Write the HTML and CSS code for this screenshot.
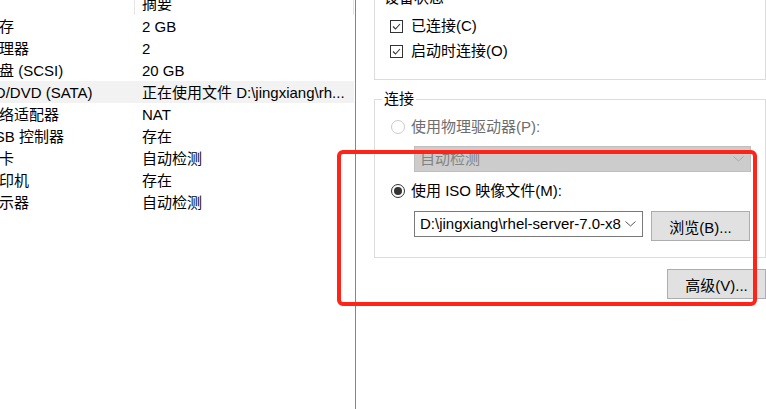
FILE: index.html
```html
<!DOCTYPE html>
<html lang="zh-CN">
<head>
    <meta charset="UTF-8">
    <title>虚拟机设置 - CD/DVD (SATA)</title>
    <link rel="stylesheet" href="styles.css">
</head>
<body>
    <div class="window">

        <div class="device-list">
            <div class="list-head">
                <span class="col-name"></span>
                <span class="col-summary">摘要</span>
            </div>
            <div class="row"><span class="col-name">内存</span><span class="col-summary">2 GB</span></div>
            <div class="row"><span class="col-name">处理器</span><span class="col-summary">2</span></div>
            <div class="row"><span class="col-name">硬盘 (SCSI)</span><span class="col-summary">20 GB</span></div>
            <div class="row selected"><span class="col-name">CD/DVD (SATA)</span><span class="col-summary">正在使用文件 D:\jingxiang\rh...</span></div>
            <div class="row"><span class="col-name">网络适配器</span><span class="col-summary">NAT</span></div>
            <div class="row"><span class="col-name">USB 控制器</span><span class="col-summary">存在</span></div>
            <div class="row"><span class="col-name">声卡</span><span class="col-summary">自动检测</span></div>
            <div class="row"><span class="col-name">打印机</span><span class="col-summary">存在</span></div>
            <div class="row"><span class="col-name">显示器</span><span class="col-summary">自动检测</span></div>
        </div>

        <div class="splitter"></div>

        <div class="settings">
            <div class="group status-group">
                <div class="group-title">设备状态</div>
                <div class="check-row first">
                    <span class="checkbox">
                        <svg width="11" height="11" viewBox="0 0 11 11"><path d="M2 5.5 L4.5 8 L9 3" fill="none" stroke="#333" stroke-width="1.1"/></svg>
                    </span>
                    已连接(C)
                </div>
                <div class="check-row">
                    <span class="checkbox">
                        <svg width="11" height="11" viewBox="0 0 11 11"><path d="M2 5.5 L4.5 8 L9 3" fill="none" stroke="#333" stroke-width="1.1"/></svg>
                    </span>
                    启动时连接(O)
                </div>
            </div>

            <div class="group connect-group">
                <div class="group-title">连接</div>
                <div class="radio-row disabled">
                    <span class="radio"></span>
                    使用物理驱动器(P):
                </div>
                <div class="combo combo-disabled">
                    <span class="combo-text">自动检测</span>
                    <svg class="chevron" width="11" height="6" viewBox="0 0 11 6"><path d="M0.5 0.5 L5.5 5 L10.5 0.5" fill="none" stroke="#a8a8a8" stroke-width="1"/></svg>
                </div>
                <div class="radio-row iso-row">
                    <span class="radio checked"></span>
                    使用 ISO 映像文件(M):
                </div>
                <div class="iso-line">
                    <div class="combo combo-iso">
                        <span class="combo-text">D:\jingxiang\rhel-server-7.0-x8</span>
                        <svg class="chevron" width="11" height="6" viewBox="0 0 11 6"><path d="M0.5 0.5 L5.5 5 L10.5 0.5" fill="none" stroke="#555" stroke-width="1"/></svg>
                    </div>
                    <button class="btn">浏览(B)...</button>
                </div>
            </div>

            <div class="button-bar">
                <button class="btn">高级(V)...</button>
            </div>
        </div>

        <!-- red highlight drawn over the screenshot -->
        <div class="annotation"></div>
    </div>
</body>
</html>
```

FILE: styles.css
```css
body {
    margin: 0;
    padding: 0;
    background: #fff;
    color: #000;
    font-family: "Liberation Sans", "Noto Sans CJK SC", "Microsoft YaHei", sans-serif;
    font-size: 15px;
    line-height: 22px;
    overflow: hidden;
}

.window {
    position: relative;
    display: flex;
    width: 766px;
    height: 409px;
    overflow: hidden;
}

/* left: hardware list */

.device-list {
    width: 354px;
    flex-shrink: 0;
}

.list-head {
    display: flex;
    height: 15px;
    margin-top: -4px;
    padding-top: 4px;
    line-height: 8px;
    overflow: hidden;
}

.list-head .col-summary {
    border-left: 1px solid #e5e5e5;
    border-right: 1px solid #e5e5e5;
    padding-left: 7px;
    width: 212px;
}

.row {
    display: flex;
    height: 21px;
    padding-top: 1px;
    line-height: 22px;
    white-space: nowrap;
}

.row.selected {
    background-color: #f2f2f2;
}

.col-name {
    width: 134px;
    flex-shrink: 0;
    overflow: hidden;
    white-space: nowrap;
    text-indent: -16px;
}

.row .col-summary {
    padding-left: 8px;
    overflow: hidden;
}

.splitter {
    width: 1px;
    margin-left: 1px;
    background-color: #868686;
    flex-shrink: 0;
}

/* right: settings */

.settings {
    flex: 1;
    padding-left: 18px;
    margin-top: -2px;
}

.group {
    border: 1px solid #dcdcdc;
}

.group-title {
    display: block;
    width: fit-content;
    height: 20px;
    line-height: 20px;
    margin: -11px 0 0 7px;
    padding: 0 2px;
    background: #fff;
}

.status-group {
    padding-bottom: 17px;
}

.check-row {
    display: flex;
    align-items: center;
    height: 22px;
    margin-top: 3px;
    padding-left: 15px;
}

.check-row.first {
    margin-top: 7px;
}

.checkbox {
    display: flex;
    align-items: center;
    justify-content: center;
    width: 11px;
    height: 11px;
    border: 1px solid #333;
    margin-right: 8px;
}

.connect-group {
    margin-top: 19px;
    padding-bottom: 16px;
}

.radio-row {
    display: flex;
    align-items: center;
    height: 22px;
    margin-top: 7px;
    padding-left: 16px;
}

.radio-row.disabled {
    color: #6d6d6d;
}

.radio-row.iso-row {
    margin-top: 8px;
}

.radio {
    box-sizing: border-box;
    width: 14px;
    height: 14px;
    border: 1px solid #333;
    border-radius: 50%;
    margin-right: 6px;
    background: #fff;
    display: flex;
    align-items: center;
    justify-content: center;
}

.radio-row.disabled .radio {
    border-color: #cccccc;
}

.radio.checked::after {
    content: "";
    width: 8px;
    height: 8px;
    border-radius: 50%;
    background: #333;
}

.combo {
    box-sizing: border-box;
    display: flex;
    align-items: center;
    height: 26px;
    padding: 0 6px 0 5px;
    white-space: nowrap;
}

.combo-text {
    flex: 1;
    min-width: 0;
    overflow: hidden;
}

.combo-disabled {
    margin: 8px 14px 0 39px;
    background-color: #cccccc;
    border: 1px solid #bfbfbf;
    color: #838383;
}

.iso-line {
    display: flex;
    align-items: flex-start;
    gap: 8px;
    margin: 9px 15px 0 39px;
}

.combo-iso {
    width: 229px;
    background: #fff;
    border: 1px solid #7a7a7a;
}

.chevron {
    margin-left: 4px;
    flex-shrink: 0;
}

.btn {
    box-sizing: border-box;
    width: 99px;
    height: 30px;
    padding: 0;
    background-color: #e1e1e1;
    border: 1px solid #adadad;
    color: #000;
    font-family: inherit;
    font-size: 15px;
}

.button-bar {
    display: flex;
    justify-content: flex-end;
    margin-top: 11px;
}

.annotation {
    position: absolute;
    left: 337px;
    top: 150px;
    width: 412px;
    height: 148px;
    border: 4px solid #ff2318;
    border-radius: 6px;
}
```
